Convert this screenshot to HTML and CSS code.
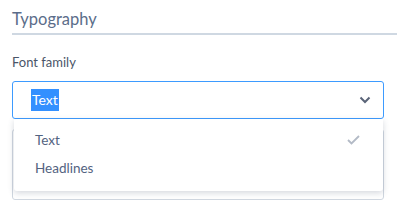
FILE: index.html
```html
<!DOCTYPE html>
<html lang="en">
<head>
    <meta charset="UTF-8">
    <title>Typography</title>
    <link rel="stylesheet" href="styles.css">
</head>
<body>
    <div class="panel">
        <h2 class="section-title">Typography</h2>
        <label class="field-label">Font family</label>
        <div class="select-wrap">
            <div class="select-box">
                <span class="select-value">Text</span>
                <svg class="chevron" width="12" height="8" viewBox="0 0 12 8">
                    <path d="M1.5 1.5 L6 6 L10.5 1.5" fill="none" stroke="#5a6478" stroke-width="2"/>
                </svg>
            </div>
            <ul class="menu">
                <li class="menu-item">
                    Text
                    <svg class="check" width="13" height="10" viewBox="0 0 13 10">
                        <path d="M1 5 L4.5 8.5 L12 1" fill="none" stroke="#b3bac6" stroke-width="1.8"/>
                    </svg>
                </li>
                <li class="menu-item">Headlines</li>
            </ul>
            <div class="next-field"></div>
        </div>
    </div>
</body>
</html>
```

FILE: styles.css
```css
body {
    margin: 0;
    padding: 0;
    background: #fff;
    font-family: Lato, "Open Sans", sans-serif;
}
.panel {
    padding: 9px 0 0 12px;
}
.section-title {
    margin: 0;
    font-size: 16.5px;
    font-weight: normal;
    color: #5b6d8a;
    line-height: 20px;
    padding-bottom: 4px;
    border-bottom: 2px solid #cfd8e2;
}
.field-label {
    display: block;
    margin-top: 19px;
    font-size: 13px;
    line-height: 16px;
    color: #4a5568;
}
.select-wrap {
    position: relative;
    margin-top: 11px;
    width: 372px;
}
.select-box {
    display: flex;
    align-items: center;
    justify-content: space-between;
    height: 36px;
    padding: 0 12px 0 18px;
    border: 1px solid #3d9bff;
    border-radius: 3px;
}
.select-value {
    background: #3390ff;
    color: #fff;
    font-size: 14px;
    line-height: 22px;
    padding: 0 1px;
}
.chevron {
    display: block;
}
.next-field {
    margin-top: 10px;
    height: 69px;
    border: 1px solid #d0d7e0;
    border-radius: 3px;
}
.menu {
    position: absolute;
    top: 38px;
    left: 2px;
    right: 1px;
    margin: 0;
    padding: 7px 0 9px;
    list-style: none;
    background: #fff;
    border-radius: 0 0 3px 3px;
    box-shadow: 0 2px 6px rgba(60, 75, 100, 0.22);
}
.menu-item {
    display: flex;
    align-items: center;
    justify-content: space-between;
    height: 28px;
    padding: 0 23px 0 21px;
    font-size: 13.5px;
    color: #536381;
}
```
